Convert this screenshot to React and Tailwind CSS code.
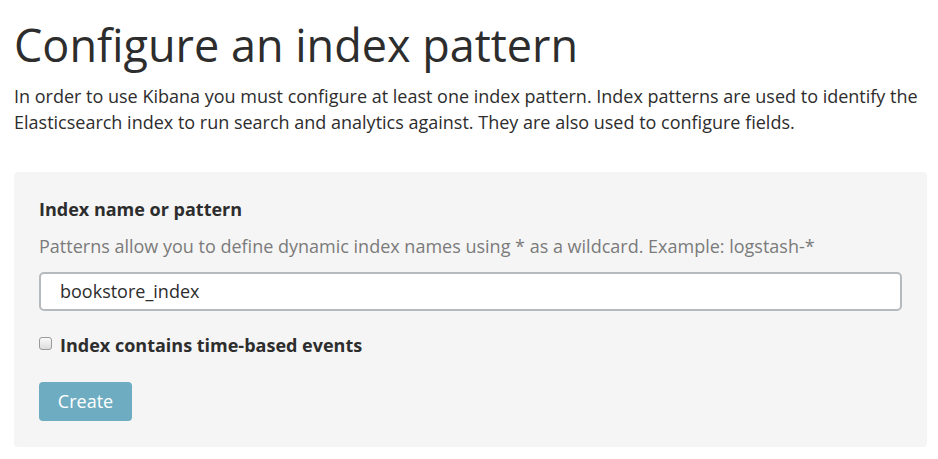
export default function App() {
  return (
    <div className="bg-white w-[938px] h-[459px] overflow-hidden px-[14px] text-[#2d2d2d]" style={{ fontFamily: '"Open Sans", sans-serif' }}>
      <h1 className="text-[45px] leading-[54px] pt-[18px] font-normal">Configure an index pattern</h1>
      <p className="text-[18px] leading-[26px] mt-[11px] pr-[4px]">
        In order to use Kibana you must configure at least one index pattern. Index patterns are used to identify the Elasticsearch index to run search and analytics against. They are also used to configure fields.
      </p>
      <div className="mt-[37px] w-[913px] h-[275px] bg-[#f5f5f5] rounded-[4px] px-[25px] pt-[25px]">
        <div className="text-[18px] font-bold leading-[24px]">Index name or pattern</div>
        <div className="text-[18px] leading-[24px] mt-[13px] text-[#7b7b7b]">Patterns allow you to define dynamic index names using * as a wildcard. Example: logstash-*</div>
        <div className="mt-[14px] w-[863px] h-[39px] bg-white border-2 border-[#b5babe] rounded-[5px] flex items-center pl-[19px] text-[18px]">bookstore_index</div>
        <label className="flex items-center mt-[22px] text-[18px] font-bold leading-[24px]">
          <span className="w-[13px] h-[13px] border border-[#9a9a9a] rounded-[3px] bg-gradient-to-b from-[#fafafa] to-[#dcdcdc] mr-[8px] -mt-[3px]"></span>
          Index contains time-based events
        </label>
        <button className="mt-[25px] w-[93px] h-[39px] bg-[#6eadc1] text-white text-[18px] rounded-[4px]">Create</button>
      </div>
    </div>
  );
}
